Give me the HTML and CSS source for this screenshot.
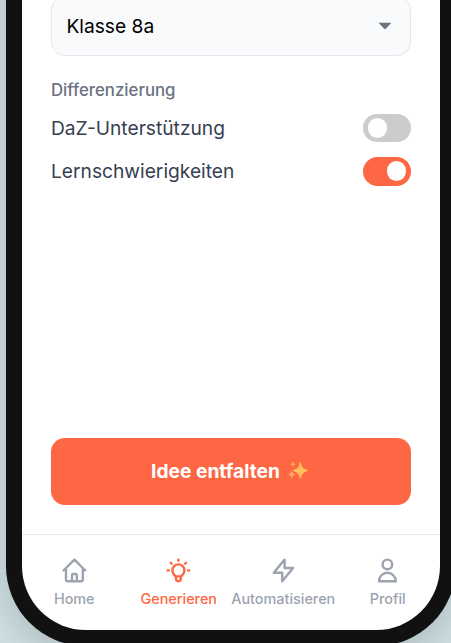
FILE: index.html
```html
<!DOCTYPE html>
<html lang="de">
<head>
<meta charset="utf-8">
<title>Idee entfalten</title>
<link rel="stylesheet" href="styles.css">
</head>
<body>
<div class="phone">
  <main class="content">
    <div class="select"><span>Klasse 8a</span>
      <svg class="caret" viewBox="0 0 14 8"><path d="M.5 .7h13L8 6.5Q7 7.5 6 6.5z" fill="#6b7280"/></svg>
    </div>
    <h2 class="section-label">Differenzierung</h2>
    <div class="option"><span>DaZ-Unterstützung</span><span class="toggle"></span></div>
    <div class="option"><span>Lernschwierigkeiten</span><span class="toggle toggle-on"></span></div>
    <button class="submit"><span>Idee entfalten</span>
      <svg class="sparkles" viewBox="0 0 20 20">
        <defs><linearGradient id="gold" x1="0" y1="0" x2="0" y2="1"><stop offset="0" stop-color="#ffb047"/><stop offset=".55" stop-color="#ffc45e"/><stop offset="1" stop-color="#ff9f58"/></linearGradient></defs>
        <path fill="url(#gold)" d="M12.3 .8Q13 .8 13.3 2.4Q14.2 7.7 18.3 8.6Q19.7 9 19.7 9.6T18.3 10.5Q14.3 11.5 13.3 16.3Q13 18 12.3 18T11.3 16.3Q10.3 11.5 6.4 10.5Q5 10.2 5 9.6T6.4 8.6Q10.4 7.7 11.3 2.4Q11.6 .8 12.3 .8z"/>
        <path fill="#ffad4b" d="M5 .5Q5.5 2.7 7.5 3.2Q5.5 3.7 5 5.9Q4.4 3.7 2.4 3.2Q4.4 2.7 5 .5z"/>
        <path fill="#ffa868" d="M3.7 9.8Q4.3 12.9 7 13.5Q4.3 14.2 3.7 17.3Q3.1 14.2 .3 13.5Q3.1 12.9 3.7 9.8z"/>
      </svg>
    </button>
  </main>
  <nav class="tabs">
    <a class="tab"><svg class="icon" viewBox="0 0 24 24"><path d="M3 12l2-2m0 0l7-7 7 7M5 10v10a1 1 0 001 1h3m10-11l2 2m-2-2v10a1 1 0 01-1 1h-3m-6 0a1 1 0 001-1v-4a1 1 0 011-1h2a1 1 0 011 1v4a1 1 0 001 1m-6 0h6"/></svg><span>Home</span></a>
    <a class="tab tab-active"><svg class="icon" viewBox="0 0 24 24"><path d="M9.663 17h4.673M12 3v1m6.364 1.636l-.707.707M21 12h-1M4 12H3m3.343-5.657l-.707-.707m2.828 9.9a5 5 0 117.072 0l-.548.547A3.374 3.374 0 0014 18.469V19a2 2 0 11-4 0v-.531c0-.895-.356-1.754-.988-2.386l-.548-.547z"/></svg><span>Generieren</span></a>
    <a class="tab"><svg class="icon" viewBox="0 0 24 24"><path d="M13 10V3L4 14h7v7l9-11h-7z"/></svg><span>Automatisieren</span></a>
    <a class="tab"><svg class="icon" viewBox="0 0 24 24"><path d="M16 7a4 4 0 11-8 0 4 4 0 018 0zM12 14a7 7 0 00-7 7h14a7 7 0 00-7-7z"/></svg><span>Profil</span></a>
  </nav>
</div>
</body>
</html>
```
FILE: styles.css
```css
* { box-sizing: border-box; }
html, body { height: 100%; }
body {
  margin: 0;
  overflow: hidden;
  background: #d2e3e6;
  font-family: Inter, "Liberation Sans", sans-serif;
}
.phone {
  width: 450px;
  height: 706px;
  margin: -60px 0 0 6px;
  padding-top: 44px;
  display: flex;
  flex-direction: column;
  background: #fff;
  border: 16px solid #111;
  border-top: 0;
  border-radius: 0 0 80px 80px;
  box-shadow: 0 12px 48px rgba(0, 0, 0, .2);
}
.content {
  flex: 1;
  padding: 12px 29px 29px;
  display: flex;
  flex-direction: column;
}
.select {
  height: 60px;
  flex: none;
  padding: 0 18px 0 14.4px;
  display: flex;
  align-items: center;
  justify-content: space-between;
  background: #f9fafb;
  border: 1px solid #e5e7eb;
  border-radius: 14px;
  font-size: 19.2px;
  color: #000;
}
.caret { width: 14px; height: 8px; }
.section-label {
  margin: 24px 0 13px;
  font-size: 16.8px;
  line-height: 21px;
  font-weight: 500;
  color: #6b7280;
}
.option {
  height: 28px;
  margin-bottom: 15px;
  display: flex;
  align-items: center;
  justify-content: space-between;
  font-size: 19.2px;
  color: #374151;
}
.toggle {
  width: 48px;
  height: 28px;
  padding: 4.4px 4.8px;
  display: flex;
  border-radius: 20px;
  background: #ccc;
}
.toggle::before {
  content: "";
  width: 19.2px;
  height: 19.2px;
  border-radius: 50%;
  background: #fff;
}
.toggle-on {
  height: 29px;
  padding-top: 4.9px;
  justify-content: flex-end;
  background: #fe6743;
}
.submit {
  height: 67px;
  margin-top: auto;
  padding: 0 3px 1px 0;
  display: flex;
  align-items: center;
  justify-content: center;
  gap: 8px;
  border: 0;
  border-radius: 14px;
  background: #fe6743;
  color: #fff;
  font: 700 19.2px Inter, "Liberation Sans", sans-serif;
}
.sparkles { width: 20px; height: 20px; }
.tabs {
  height: 96px;
  flex: none;
  padding-top: 21px;
  display: grid;
  grid-template-columns: repeat(4, 1fr);
  border-top: 1px solid #e5e7eb;
}
.tab {
  display: flex;
  flex-direction: column;
  align-items: center;
  gap: 4px;
  color: #9ca3af;
  font-size: 14.4px;
  line-height: 19px;
  font-weight: 500;
}
.tab-active { color: #fe6743; }
.icon {
  width: 28.8px;
  height: 28.8px;
  fill: none;
  stroke: currentColor;
  stroke-width: 2;
  stroke-linecap: round;
  stroke-linejoin: round;
}
```
